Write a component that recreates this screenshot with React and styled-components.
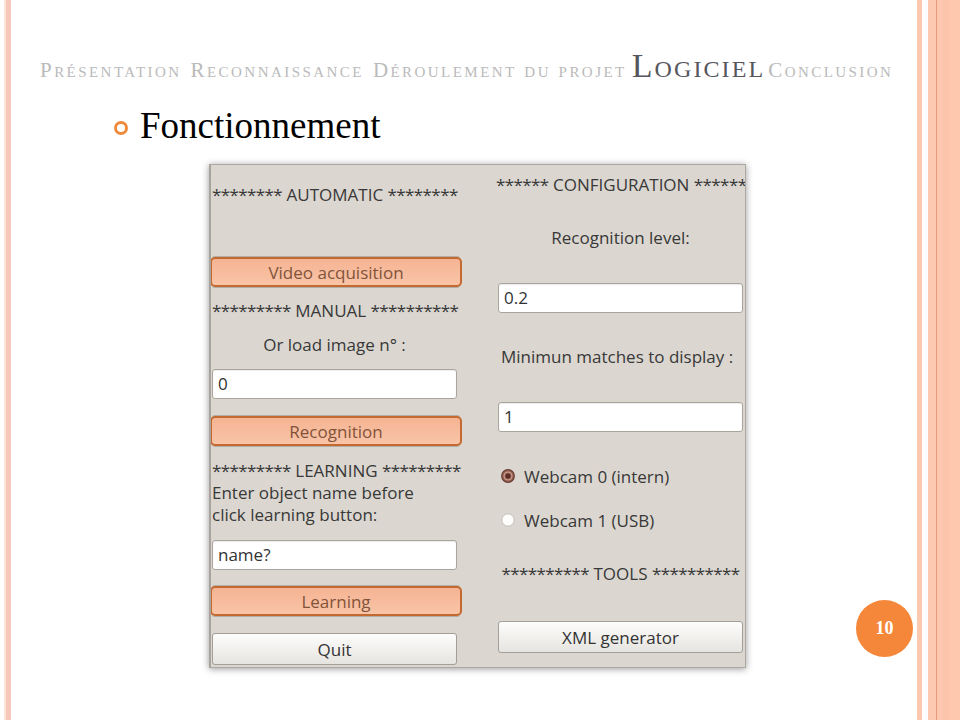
import React from "react";
import styled, { createGlobalStyle } from "styled-components";

const Global = createGlobalStyle`
  html, body { margin: 0; padding: 0; background: #fff; }
  * { box-sizing: border-box; }
`;

const Slide = styled.div`
  width: 960px;
  height: 720px;
  display: flex;
  background: #fff;
  overflow: hidden;
`;

const LeftDeco = styled.div`
  flex: none;
  width: 12px;
  background: linear-gradient(
    to right,
    #fff 0 4px,
    #fde6d8 4px 6px,
    #f6c7ba 6px 11px,
    #fff 11px
  );
`;

const RightDeco = styled.div`
  flex: none;
  width: 43px;
  background: linear-gradient(
    to right,
    #fcc9b0 0 5px,
    #fff 5px 11px,
    #fdc9b1 11px 19px,
    #e59d79 19px 20px,
    #fdc8af 20px 26px,
    #fcc5ab 26px 33px,
    #fdc8ae 33px
  );
`;

const Main = styled.div`
  flex: 1;
  display: flex;
  flex-direction: column;
`;

const Header = styled.div`
  padding: 49px 0 0 28px;
  height: 88px;
  display: flex;
  align-items: baseline;
  font-family: "Liberation Serif", "Times New Roman", serif;
  font-variant: small-caps;
  white-space: nowrap;
`;

const Crumb = styled.span`
  font-size: ${(p) => (p.$active ? 34 : 21)}px;
  letter-spacing: ${(p) => (p.$active ? 2.1 : 2.45)}px;
  color: ${(p) => (p.$active ? "#56565c" : "#bababa")};
  margin-right: ${(p) => p.$gap ?? 8}px;
  line-height: 1;
`;

const TitleRow = styled.div`
  display: flex;
  align-items: center;
  gap: 12px;
  margin-left: 102px;
  margin-top: 18px;
  height: 40px;
`;

const Bullet = styled.span`
  width: 14px;
  height: 14px;
  border-radius: 50%;
  border: 3px solid #f08a3c;
  flex: none;
  margin-top: 4px;
`;

const Title = styled.h1`
  margin: 0;
  font-family: "Liberation Serif", "Times New Roman", serif;
  font-weight: normal;
  font-size: 37px;
  line-height: 40px;
  color: #000;
`;

const BodyRow = styled.div`
  display: flex;
  align-items: flex-end;
  margin-top: 18px;
  margin-left: 197px;
`;

const Window = styled.div`
  width: 537px;
  height: 504px;
  background: #dbd7d0;
  border: 1px solid #aca8a1;
  border-left: 2px solid #a8a49d;
  box-shadow: 0 1px 7px rgba(0, 0, 0, 0.4);
  display: grid;
  grid-template-columns: 245px 245px;
  column-gap: 41px;
  padding: 0 2px 0 1px;
  font-family: "Open Sans", "DejaVu Sans", sans-serif;
  font-size: 17px;
  color: #383838;
  overflow: hidden;
`;

const Column = styled.div`
  display: flex;
  flex-direction: column;
  min-width: 0;
`;

const Label = styled.div`
  height: 22px;
  line-height: 22px;
  margin-top: ${(p) => p.$mt || 0}px;
  margin-left: ${(p) => p.$ml || 0}px;
  text-align: ${(p) => p.$align || "left"};
  padding-left: ${(p) => p.$pl || 0}px;
  white-space: nowrap;
`;

const Stars = styled.span`
  letter-spacing: -0.6px;
`;

const Input = styled.div`
  height: 30px;
  margin-top: ${(p) => p.$mt || 0}px;
  background: #fff;
  border: 1px solid #a9a59e;
  border-radius: 3px;
  box-shadow: inset 0 1px 1px rgba(0, 0, 0, 0.08);
  padding-left: 5px;
  line-height: 28px;
  color: #333;
`;

const Button = styled.div`
  margin-top: ${(p) => p.$mt || 0}px;
  display: flex;
  align-items: center;
  justify-content: center;
  ${(p) =>
    p.$focus
      ? `
    height: 30px;
    margin-left: -2px;
    margin-right: -5px;
    border: 2px solid #c46a30;
    border-radius: 5px;
    background: linear-gradient(#f5b493, #f9c4a7);
    color: #82533a;
    box-shadow: 0 -3px 0 -2px #b2aea7, 0 3px 0 -2px #b2aea7;
  `
      : `
    height: 32px;
    border: 1px solid #a29e98;
    border-radius: 3px;
    background: linear-gradient(#fdfdfc, #e6e4e0);
    color: #333;
  `}
`;

const RadioRow = styled.div`
  height: 22px;
  margin-top: ${(p) => p.$mt || 0}px;
  display: flex;
  align-items: center;
  gap: 9px;
  padding-left: 3px;
`;

const Badge = styled.div`
  flex: none;
  width: 57px;
  height: 57px;
  border-radius: 50%;
  background: #f5873a;
  color: #fff;
  font-family: "Liberation Serif", "Times New Roman", serif;
  font-weight: bold;
  font-size: 18px;
  display: flex;
  align-items: center;
  justify-content: center;
  margin-left: 110px;
  margin-bottom: 11px;
`;

const RadioIcon = ({ checked }) => (
  <svg width="14" height="14" viewBox="0 0 14 14">
    {checked ? (
      <>
        <circle cx="7" cy="7" r="6.3" fill="#9c6658" stroke="#6a3c31" strokeWidth="1.2" />
        <circle cx="7" cy="7" r="4" fill="none" stroke="#c99a8e" strokeWidth="1" />
        <circle cx="7" cy="7" r="2.6" fill="#5c2d24" />
      </>
    ) : (
      <circle cx="7" cy="7" r="6.2" fill="#fdfdfc" stroke="#c2beb7" strokeWidth="1" />
    )}
  </svg>
);

const Section = ({ left, name, right, ...rest }) => (
  <Label {...rest}>
    <Stars>{left}</Stars> {name} <Stars>{right}</Stars>
  </Label>
);

export default function App() {
  return (
    <>
      <Global />
      <Slide>
        <LeftDeco />
        <Main>
          <Header>
            <Crumb $gap={9}>Présentation</Crumb>
            <Crumb $gap={9}>Reconnaissance</Crumb>
            <Crumb $gap={5}>Déroulement du projet</Crumb>
            <Crumb $active $gap={3}>Logiciel</Crumb>
            <Crumb>Conclusion</Crumb>
          </Header>
          <TitleRow>
            <Bullet />
            <Title>Fonctionnement</Title>
          </TitleRow>
          <BodyRow>
            <Window>
              <Column>
                <Section $mt={19} left="********" name="AUTOMATIC" right="********" />
                <Button $focus $mt={51}>Video acquisition</Button>
                <Section $mt={13} left="*********" name="MANUAL" right="**********" />
                <Label $mt={12} $align="center">Or load image n° :</Label>
                <Input $mt={13}>0</Input>
                <Button $focus $mt={17}>Recognition</Button>
                <Section $mt={14} left="*********" name="LEARNING" right="*********" />
                <Label>Enter object name before</Label>
                <Label>click learning button:</Label>
                <Input $mt={14}>name?</Input>
                <Button $focus $mt={16}>Learning</Button>
                <Button $mt={17}>Quit</Button>
              </Column>
              <Column>
                <Section $mt={9} $ml={-2} left="******" name="CONFIGURATION" right="******" />
                <Label $mt={31} $align="center">Recognition level:</Label>
                <Input $mt={34}>0.2</Input>
                <Label $mt={33} $pl={3}>Minimun matches to display :</Label>
                <Input $mt={34}>1</Input>
                <RadioRow $mt={33}>
                  <RadioIcon checked />
                  Webcam 0 (intern)
                </RadioRow>
                <RadioRow $mt={22}>
                  <RadioIcon />
                  Webcam 1 (USB)
                </RadioRow>
                <Section $mt={32} $align="center" left="**********" name="TOOLS" right="**********" />
                <Button $mt={36}>XML generator</Button>
              </Column>
            </Window>
            <Badge>10</Badge>
          </BodyRow>
        </Main>
        <RightDeco />
      </Slide>
    </>
  );
}
